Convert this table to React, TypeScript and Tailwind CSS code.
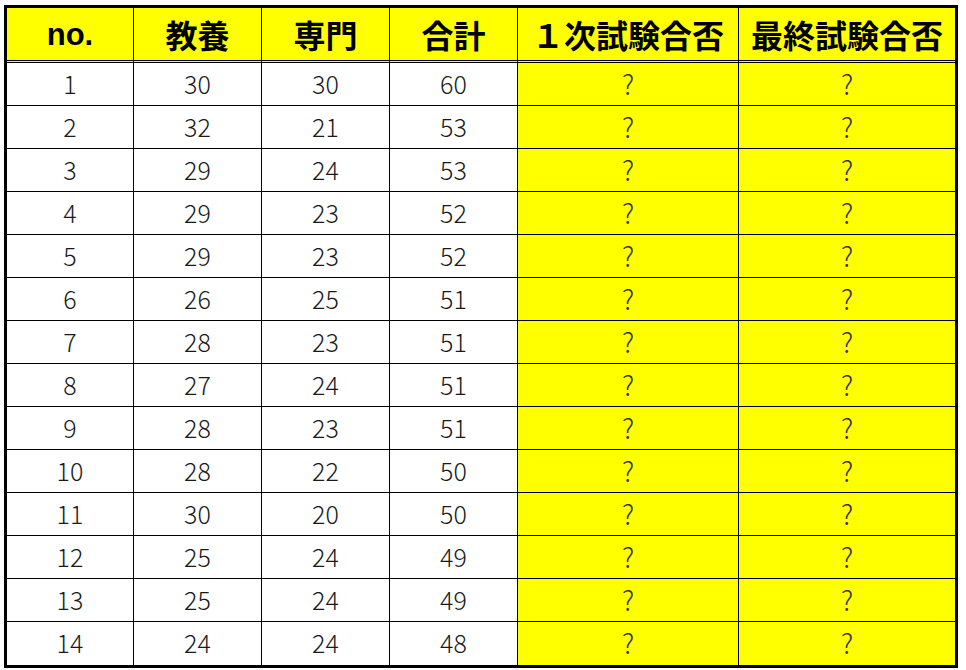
const rows: [number, number, number, number][] = [
  [1, 30, 30, 60],
  [2, 32, 21, 53],
  [3, 29, 24, 53],
  [4, 29, 23, 52],
  [5, 29, 23, 52],
  [6, 26, 25, 51],
  [7, 28, 23, 51],
  [8, 27, 24, 51],
  [9, 28, 23, 51],
  [10, 28, 22, 50],
  [11, 30, 20, 50],
  [12, 25, 24, 49],
  [13, 25, 24, 49],
  [14, 24, 24, 48],
]

const headers = ["no.", "教養", "専門", "合計", "１次試験合否", "最終試験合否"]

const jp = "font-['Noto_Sans_CJK_JP','Noto_Sans',sans-serif]"

export default function App() {
  return (
    <div className="w-[966px] h-[670px] bg-white pt-[5px] pl-[4px] overflow-hidden">
      <div className="w-[954px] border-[3px] border-black grid grid-cols-[127px_128px_128px_128px_221px_216px]">
        {headers.map((h, i) => (
          <div
            key={h}
            className={`h-[55px] bg-[#ffff00] border-b-[3px] border-double border-black flex items-center justify-center ${
              i < 5 ? "border-r" : ""
            }`}
          >
            <span
              className={`${
                i === 0 ? "font-['Liberation_Sans',sans-serif] text-[31px]" : `${jp} text-[32px]`
              } font-bold text-black leading-none`}
            >
              {h}
            </span>
          </div>
        ))}
        {rows.map((r, ri) => {
          const last = ri === rows.length - 1
          return [
            ...r.map((v, ci) => (
              <div
                key={`${ri}-${ci}`}
                className={`h-[43px] border-r border-black flex items-center justify-center bg-white pb-[2px] ${
                  last ? "h-[42px]" : "border-b"
                }`}
              >
                <span className={`${jp} font-light text-[25px] leading-none text-[#1a1a1a]`}>{v}</span>
              </div>
            )),
            <div
              key={`${ri}-a`}
              className={`h-[43px] border-r border-black bg-[#ffff00] flex items-center justify-center pb-[2px] ${
                last ? "h-[42px]" : "border-b"
              }`}
            >
              <span className={`${jp} font-light text-[27px] leading-none text-[#333]`}>?</span>
            </div>,
            <div
              key={`${ri}-b`}
              className={`h-[43px] border-black bg-[#ffff00] flex items-center justify-center pb-[2px] ${
                last ? "h-[42px]" : "border-b"
              }`}
            >
              <span className={`${jp} font-light text-[27px] leading-none text-[#333]`}>?</span>
            </div>,
          ]
        })}
      </div>
    </div>
  )
}
